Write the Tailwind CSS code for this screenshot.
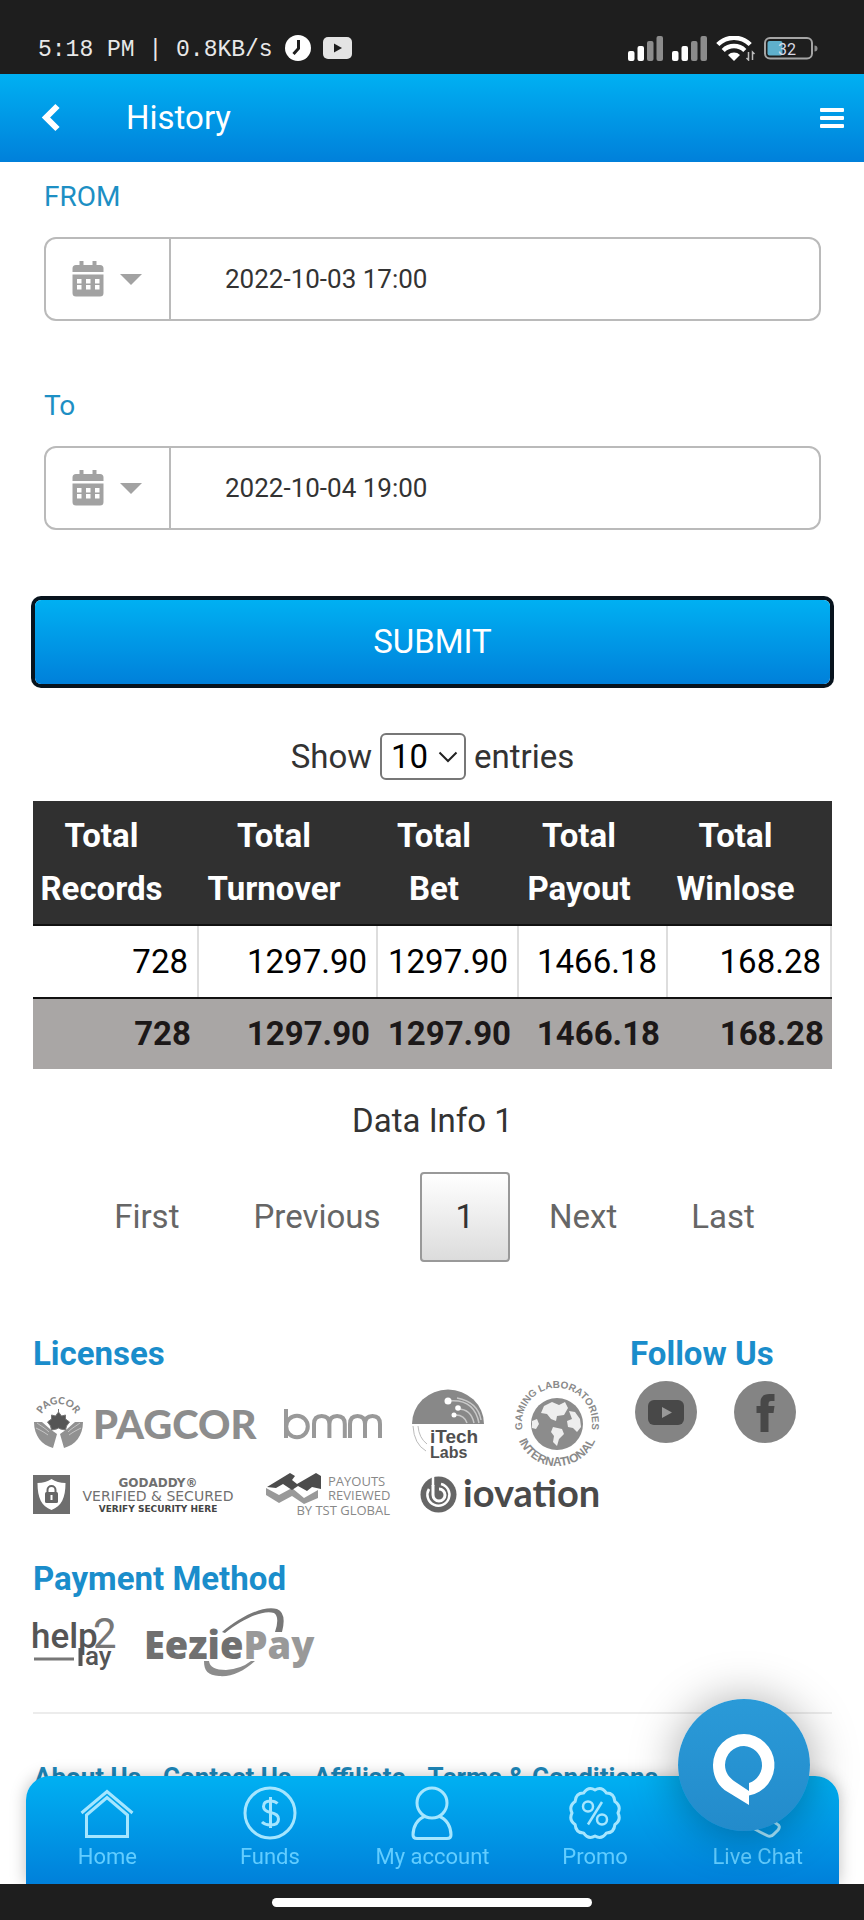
<!DOCTYPE html>
<html lang="en">
<head>
    <meta charset="UTF-8">
    <meta name="viewport" content="width=device-width, initial-scale=1.0">
    <title>History</title>
    <script src="https://cdn.jsdelivr.net/npm/@tailwindcss/browser@4"></script>
</head>
<body class="bg-white font-[Roboto,sans-serif] text-[#333]">

    <!-- Phone status bar -->
    <div class="h-[74px] bg-[#1e1e1e] flex items-end justify-between pl-[38px] pr-[46px] pb-3">
        <div class="flex items-center gap-3 text-[#e8e8e8]">
            <span class="font-['Liberation_Mono',monospace] text-[23px] leading-6 pt-1 whitespace-nowrap">5:18 PM | 0.8KB/s</span>
            <svg class="w-[26px] h-[26px]" viewBox="0 0 26 26"><circle cx="13" cy="13" r="13" fill="#fff"/><path d="M13.500 5v8.500L8.500 19" fill="none" stroke="#1e1e1e" stroke-width="3"/></svg>
            <svg class="w-[29px] h-[22px]" viewBox="0 0 29 22"><rect width="29" height="22" rx="5" fill="#e4e4e4"/><path d="M11 6.500v9l8-4.500z" fill="#1e1e1e"/></svg>
        </div>
        <div class="flex items-center gap-2 pb-px">
            <svg class="w-[36px] h-[25px]" viewBox="0 0 36 25"><g fill="#fff"><rect x="0" y="15" width="6.500" height="10" rx="2"/><rect x="9.500" y="10" width="6.500" height="15" rx="2"/></g><g fill="#8c8c8c"><rect x="19" y="5" width="6.500" height="20" rx="2"/><rect x="28.500" y="0" width="6.500" height="25" rx="2"/></g></svg>
            <svg class="w-[36px] h-[25px]" viewBox="0 0 36 25"><g fill="#fff"><rect x="0" y="15" width="6.500" height="10" rx="2"/><rect x="9.500" y="10" width="6.500" height="15" rx="2"/></g><g fill="#8c8c8c"><rect x="19" y="5" width="6.500" height="20" rx="2"/><rect x="28.500" y="0" width="6.500" height="25" rx="2"/></g></svg>
            <svg class="w-[40px] h-[25px]" viewBox="0 0 40 25"><g fill="none" stroke="#fff" stroke-width="4.500"><path d="M1.800 8.500a23 23 0 0 1 32.400 0"/><path d="M7.200 14.500a15.500 15.500 0 0 1 21.600 0"/></g><path d="M12 19a8.500 8.500 0 0 1 12 0l-6 6z" fill="#fff"/><path d="M32.500 16v8l-2-2M36.500 24v-8l2 2" fill="none" stroke="#bbb" stroke-width="1.500"/></svg>
            <svg class="w-[54px] h-[23px]" viewBox="0 0 54 23"><rect x="1" y="1" width="47" height="20.500" rx="5" fill="none" stroke="#a5a5a5" stroke-width="2"/><rect x="3.500" y="4" width="15" height="14.500" rx="2" fill="#5fb0cc"/><path d="M50.500 8.500q3 0 3 3t-3 3z" fill="#8c8c8c"/><text x="14" y="17.500" font-size="16" font-family="Roboto, sans-serif" fill="#d8d8e4">32</text></svg>
        </div>
    </div>

    <header class="h-[88px] bg-linear-to-b from-[#00b0f2] to-[#0080da] flex items-center text-white pl-10 pr-5">
        <button type="button" aria-label="Back">
            <svg class="w-5 h-8" viewBox="0 0 20 32" fill="none" stroke="currentColor" stroke-width="6"><path d="M17.500 4 6 15.500 17.500 27"/></svg>
        </button>
        <h1 class="flex-1 pl-[66px] text-[33px] leading-10">History</h1>
        <button type="button" aria-label="Menu">
            <svg class="w-6 h-5" viewBox="0 0 24 20" fill="currentColor"><rect width="24" height="4" rx="1"/><rect y="8" width="24" height="4" rx="1"/><rect y="16" width="24" height="4" rx="1"/></svg>
        </button>
    </header>

    <main class="pl-[33px] pr-8 pb-32">
        <form class="pt-[15px]">
            <div class="mx-[11px] flex flex-col gap-[65px]">
                <div>
                    <label for="from" class="block text-[28px] leading-10 text-[#1d8fc4] mb-5">FROM</label>
                    <div class="flex h-[84px] border-2 border-[#bababa] rounded-xl overflow-hidden">
                        <button type="button" aria-label="Pick start date" class="w-[125px] shrink-0 border-r-2 border-[#bababa] flex items-center gap-4 pl-[26px] text-[#a2a2a2]">
                            <svg class="w-8 h-9" viewBox="0 0 32 36" fill="currentColor"><path fill-rule="evenodd" d="M7.500 0h4v4h9V0h4v4H28a3.500 3.500 0 0 1 3.500 3.500V11H.5V7.500A3.500 3.500 0 0 1 4 4h3.500zM.5 13.500h31V32a3.500 3.500 0 0 1-3.500 3.500H4A3.500 3.500 0 0 1 .5 32zM5 18v4.500h4.500V18zm9 0v4.500h4.500V18zm9 0v4.500h4.500V18zM5 24v4.500h4.500V24zm9 0v4.500h4.500V24zm9 0v4.500h4.500V24z"/></svg>
                            <svg class="w-[22px] h-[11px]" viewBox="0 0 22 11" fill="currentColor"><path d="M0 0h22L11 11z"/></svg>
                        </button>
                        <input id="from" type="text" value="2022-10-03 17:00" class="flex-1 min-w-0 pl-[54px] text-[26px] text-[#333] outline-none">
                    </div>
                </div>
                <div>
                    <label for="to" class="block text-[28px] leading-10 text-[#1d8fc4] mb-5">To</label>
                    <div class="flex h-[84px] border-2 border-[#bababa] rounded-xl overflow-hidden">
                        <button type="button" aria-label="Pick end date" class="w-[125px] shrink-0 border-r-2 border-[#bababa] flex items-center gap-4 pl-[26px] text-[#a2a2a2]">
                            <svg class="w-8 h-9" viewBox="0 0 32 36" fill="currentColor"><path fill-rule="evenodd" d="M7.500 0h4v4h9V0h4v4H28a3.500 3.500 0 0 1 3.500 3.500V11H.5V7.500A3.500 3.500 0 0 1 4 4h3.500zM.5 13.500h31V32a3.500 3.500 0 0 1-3.500 3.500H4A3.500 3.500 0 0 1 .5 32zM5 18v4.500h4.500V18zm9 0v4.500h4.500V18zm9 0v4.500h4.500V18zM5 24v4.500h4.500V24zm9 0v4.500h4.500V24zm9 0v4.500h4.500V24z"/></svg>
                            <svg class="w-[22px] h-[11px]" viewBox="0 0 22 11" fill="currentColor"><path d="M0 0h22L11 11z"/></svg>
                        </button>
                        <input id="to" type="text" value="2022-10-04 19:00" class="flex-1 min-w-0 pl-[54px] text-[26px] text-[#333] outline-none">
                    </div>
                </div>
            </div>
            <div class="mt-[70px] px-[2px]">
                <button type="submit" class="block w-full h-[84px] rounded-md ring-4 ring-[#07131d] bg-linear-to-b from-[#00b0f2] to-[#0080da] text-white text-[33px]">SUBMIT</button>
            </div>
        </form>

        <div class="mt-[49px] flex items-center justify-center gap-2 text-[33px] leading-[47px]">
            <label for="entries">Show</label>
            <div class="relative">
                <select id="entries" class="block appearance-none w-[86px] h-[47px] border-2 border-[#777] rounded-md pl-[9px] text-[33px] leading-10 text-black bg-white">
                    <option>10</option>
                    <option>25</option>
                    <option>50</option>
                </select>
                <svg class="absolute right-2 top-[18px] w-5 h-3 pointer-events-none" viewBox="0 0 20 12" fill="none" stroke="#222" stroke-width="2"><path d="m1.500 1.500 8.500 8.500 8.500-8.500"/></svg>
            </div>
            <span>entries</span>
        </div>

        <table class="mt-[21px] w-full table-fixed border-separate border-spacing-0 text-[33px]">
            <colgroup>
                <col class="w-[166px]">
                <col class="w-[179px]">
                <col class="w-[141px]">
                <col class="w-[149px]">
                <col>
            </colgroup>
            <thead class="bg-[#303030] text-white leading-[53px]">
                <tr>
                    <th class="pt-2 pb-[9px] pl-[5px] pr-[34px] border-b-2 border-[#111]">Total<br>Records</th>
                    <th class="pt-2 pb-[9px] pl-[5px] pr-[34px] border-b-2 border-[#111]">Total<br>Turnover</th>
                    <th class="pt-2 pb-[9px] pl-[5px] pr-[34px] border-b-2 border-[#111]">Total<br>Bet</th>
                    <th class="pt-2 pb-[9px] pl-[5px] pr-[34px] border-b-2 border-[#111]">Total<br>Payout</th>
                    <th class="pt-2 pb-[9px] pl-[5px] pr-[34px] border-b-2 border-[#111]">Total<br>Winlose</th>
                </tr>
            </thead>
            <tbody class="text-black text-right">
                <tr class="h-[71px]">
                    <td class="pr-[9px] border-r-2 border-[#ddd]">728</td>
                    <td class="pr-[9px] border-r-2 border-[#ddd]">1297.90</td>
                    <td class="pr-[9px] border-r-2 border-[#ddd]">1297.90</td>
                    <td class="pr-[9px] border-r-2 border-[#ddd]">1466.18</td>
                    <td class="pr-[9px] border-r-2 border-[#ddd]">168.28</td>
                </tr>
            </tbody>
            <tfoot class="bg-[#a9a6a5] text-[#1c1818] text-right font-bold">
                <tr class="h-[72px]">
                    <td class="pr-2 border-t-2 border-[#111]">728</td>
                    <td class="pr-2 border-t-2 border-[#111]">1297.90</td>
                    <td class="pr-2 border-t-2 border-[#111]">1297.90</td>
                    <td class="pr-2 border-t-2 border-[#111]">1466.18</td>
                    <td class="pr-2 border-t-2 border-[#111]">168.28</td>
                </tr>
            </tfoot>
        </table>

        <p class="mt-7 text-center text-[33px] leading-[48px]">Data Info 1</p>

        <nav aria-label="Pages" class="mt-[27px] pl-1 flex justify-center gap-1 text-[33px] text-[#666]">
            <a href="#" class="px-[35px] leading-[90px]">First</a>
            <a href="#" class="px-[35px] leading-[90px]">Previous</a>
            <a href="#" aria-current="page" class="px-[34px] leading-[86px] border-2 border-[#999] rounded-sm bg-linear-to-b from-white to-[#dcdcdc] text-[#333]">1</a>
            <a href="#" class="px-[35px] leading-[90px]">Next</a>
            <a href="#" class="px-[35px] leading-[90px]">Last</a>
        </nav>

        <footer class="mt-[68px]">
            <div class="flex gap-[30px]">
                <section class="w-[567px]">
                    <h2 class="text-[33px] leading-[48px] font-bold text-[#1a8dcb]">Licenses</h2>
                    <div class="mt-[3px] flex items-center justify-between">
                        <!-- PAGCOR -->
                        <svg class="w-[222px] h-[50px] overflow-visible" viewBox="0 0 222 50" role="img" aria-label="PAGCOR">
                            <defs><path id="pagcorArc" d="M6.500 24a19 19 0 0 1 38 0"/></defs>
                            <text font-family="Lato, sans-serif" font-weight="900" font-size="10" fill="#888"><textPath href="#pagcorArc" startOffset="50%" text-anchor="middle">PAGCOR</textPath></text>
                            <path d="M1 23h8l8 7 7 5-4 14C9 46 1 37 1 23zM50 23h-8l-8 7-7 5 4 14c11-3 19-12 19-26z" fill="#919191"/>
                            <path d="M4 24c4 3 8 5 12 9M3 29c4 2 8 4 12 7M47 24c-4 3-8 5-12 9M48 29c-4 2-8 4-12 7" stroke="#c4c4c4" fill="none"/>
                            <path d="M25.500 10v4M25.500 13l3 4 4-1v4l4 3-3 4-1 4-5-1-2-1-2 1-5 1-1-4-3-4 4-3v-4l4 1z" fill="#555" stroke="#777"/>
                            <path d="M25.500 32l-3 17h6z" fill="#fff"/>
                            <text x="60" y="40" font-family="Lato, sans-serif" font-weight="900" font-size="40" fill="#8d8d8d">PAGCOR</text>
                        </svg>
                        <!-- bmm -->
                        <svg class="w-[98px] h-[32px]" viewBox="0 0 98 32" role="img" aria-label="bmm">
                            <g fill="none" stroke="#999" stroke-width="4"><path d="M2 1v29"/><circle cx="13" cy="18.500" r="10.800"/><path d="M30 30V16q0-8 7.700-8t7.700 8v14M45.400 16q0-8 7.700-8t7.700 8v14"/><path d="M66 30V16q0-8 7.500-8t7.500 8v14M81 16q0-8 7.500-8t7.500 8v14"/></g>
                        </svg>
                        <!-- iTech Labs -->
                        <svg class="w-[73px] h-[70px] overflow-visible" viewBox="0 0 73 70" role="img" aria-label="iTech Labs">
                            <path d="M0 35a36 34.500 0 0 1 72 0z" fill="#888"/>
                            <g fill="none" stroke="#c8c8c8" stroke-width="1.500"><path d="M36 12q26-3 31 22M45 9q21 4 24 22M46 20q13 0 16 14M42 26q10-1 13 8"/></g>
                            <g fill="#fff"><circle cx="36" cy="12" r="3.500"/><circle cx="46" cy="19" r="2.800"/><circle cx="42" cy="26" r="2.500"/></g>
                            <path d="M1 37q1 18 13 25M6 37q1 12 9 18" fill="none" stroke="#bbb"/>
                            <g font-family="'Liberation Sans', sans-serif" font-weight="700" fill="#505050"><text x="18" y="54" font-size="19">iTech</text><text x="18" y="69" font-size="16">Labs</text></g>
                        </svg>
                        <!-- Gaming Laboratories International -->
                        <svg class="w-[86px] h-[86px] overflow-visible" viewBox="0 0 86 86" role="img" aria-label="Gaming Laboratories International">
                            <defs><path id="gliTop" d="M8.300 46.500a35 35 0 1 1 69.400 0"/><path id="gliBottom" d="M2 50a41.500 41.500 0 0 0 82 0"/></defs>
                            <g font-family="'Liberation Sans', sans-serif" font-weight="700" fill="#8a8a8a">
                                <text font-size="10"><textPath href="#gliTop" startOffset="50%" text-anchor="middle">GAMING LABORATORIES</textPath></text>
                                <text font-size="12"><textPath href="#gliBottom" startOffset="50%" text-anchor="middle">INTERNATIONAL</textPath></text>
                            </g>
                            <circle cx="43" cy="43" r="26" fill="#8c8c8c"/>
                            <g fill="#eee"><path d="M30 25l8-4 7 3 6-3 3 6-4 7-7 1-1 5-5-2-4-5-6-1zM39 46l9 2 2 5-5 5-2 7-4-4 1-6-3-4zM55 30l6 1 5 7 1 8-4 5-4-4-5-1-1-6 5-2zM18 40l5-2 2 5-3 5-4-1z"/></g>
                        </svg>
                    </div>
                    <div class="mt-1 flex items-center justify-between">
                        <!-- GoDaddy -->
                        <svg class="w-[203px] h-[42px] overflow-visible" viewBox="0 0 203 42" role="img" aria-label="GoDaddy verified and secured">
                            <rect y="1" width="37" height="39" fill="#6e6e6e"/>
                            <path d="M18.500 5q6 4 14 4c0 15-4 23-14 27C8.500 32 4.500 24 4.500 9q8 0 14-4z" fill="#fff"/>
                            <path d="M14.500 19v-3a4 4 0 0 1 8 0v3" fill="none" stroke="#666" stroke-width="2"/><rect x="12" y="18" width="13" height="11" rx="1.500" fill="#666"/><path d="M18.500 21v5" stroke="#fff" stroke-width="2"/>
                            <g text-anchor="middle" fill="#707070"><text x="125" y="13" font-size="12" font-weight="700" font-family="'DejaVu Sans', sans-serif">GODADDY®</text><text x="125" y="27" font-size="14" font-family="'DejaVu Sans', sans-serif">VERIFIED &amp; SECURED</text><text x="125" y="38" font-size="9" font-weight="700" font-family="'DejaVu Sans', sans-serif" fill="#444">VERIFY SECURITY HERE</text></g>
                        </svg>
                        <!-- TST Global -->
                        <svg class="w-[126px] h-[48px] overflow-visible" viewBox="0 0 126 48" role="img" aria-label="Payouts reviewed by TST Global">
                            <path d="M1 17l13 7 13-7 12 10 14-8v8L39 33 27 25 14 32 1 24z" fill="#999"/>
                            <path d="M2 16L25 2l5 3-3 4 5 4L51 2l5 3v13l-9-2-5 4-9-5-6 4-9-6-7 4z" fill="#4c4c4c"/>
                            <g font-family="'Open Sans', sans-serif" font-size="13" fill="#888"><text x="63" y="15">PAYOUTS</text><text x="63" y="29">REVIEWED</text><text x="125" y="44" text-anchor="end">BY TST GLOBAL</text></g>
                        </svg>
                        <!-- iovation -->
                        <svg class="w-[180px] h-[38px] overflow-visible" viewBox="0 0 180 38" role="img" aria-label="iovation">
                            <circle cx="18.500" cy="18.500" r="18" fill="#666"/><path d="M13 9v10a6 6 0 1 0 6-6" fill="none" stroke="#fff" stroke-width="3"/><path d="M13 0v10M21 8a11 11 0 1 1-12 5" fill="none" stroke="#fff" stroke-width="2.500"/>
                            <text x="43" y="31" font-family="Lato, sans-serif" font-weight="700" font-size="38" fill="#4a4a4a">iovation</text>
                        </svg>
                    </div>
                </section>
                <section>
                    <h2 class="text-[33px] leading-[48px] font-bold text-[#1a8dcb]">Follow Us</h2>
                    <div class="mt-[3px] pl-[5px] flex gap-[37px]">
                        <a href="#" aria-label="YouTube"><svg class="w-[62px] h-[62px]" viewBox="0 0 62 62"><circle cx="31" cy="31" r="31" fill="#848484"/><rect x="13" y="19" width="36" height="25" rx="6" fill="#484848"/><path d="M27 26v11l10-5.500z" fill="#999"/></svg></a>
                        <a href="#" aria-label="Facebook"><svg class="w-[62px] h-[62px]" viewBox="0 0 62 62"><circle cx="31" cy="31" r="31" fill="#848484"/><path d="M26.500 51V32H22.500v-7h4v-4q0-8 9-8h5v7h-3.500q-2.500 0-2.500 3v2h6l-1 7h-5v19z" fill="#484848"/></svg></a>
                    </div>
                </section>
            </div>

            <section class="mt-9">
                <h2 class="text-[33px] leading-[48px] font-bold text-[#1a8dcb]">Payment Method</h2>
                <div class="mt-[3px] flex items-center gap-[31px]">
                    <!-- help2pay -->
                    <svg class="w-[82px] h-[60px] overflow-visible" viewBox="0 0 82 60" role="img" aria-label="help2pay">
                        <g font-family="Roboto, sans-serif" fill="#555"><text x="-2" y="36" font-size="35" font-weight="500">help</text><text x="60" y="36" font-size="42" fill="#777">2</text><text x="52" y="53" font-size="26" font-weight="500">ay</text></g>
                        <path d="M1 47h40" stroke="#777" stroke-width="3"/><path d="M47.500 36v18" stroke="#555" stroke-width="4"/>
                    </svg>
                    <!-- EeziePay -->
                    <svg class="w-[170px] h-[72px] overflow-visible" viewBox="0 0 170 72" role="img" aria-label="EeziePay">
                        <path d="M76 26C93 12 116-1 131 3q10 4 5 23h-7q5-15-1-19C116 3 94 15 79 27z" fill="#777"/>
                        <path d="M58 55h5q1 9 17 9 15-1 25-9h4C97 66 85 71 73 70 62 69 58 65 58 55z" fill="#8c8c8c"/>
                        <text x="-2" y="53" font-family="'Open Sans', sans-serif" font-weight="800" font-size="38" fill="#707070">Eezie<tspan fill="#999">Pay</tspan></text>
                    </svg>
                </div>
            </section>

            <hr class="mt-[34px] border-t-2 border-[#ececec]">
            <div class="mt-[47px] flex gap-[22px] px-px text-[26px] leading-8 font-bold text-[#1d86b8] whitespace-nowrap">
                <a href="#">About Us</a>
                <a href="#">Contact Us</a>
                <a href="#">Affiliate</a>
                <a href="#">Terms &amp; Conditions</a>
            </div>
        </footer>
    </main>

    <!-- Bottom navigation -->
    <div class="fixed inset-x-0 bottom-0">
        <nav aria-label="Main" class="ml-[26px] mr-[25px] rounded-t-3xl bg-linear-to-b from-[#00b0f2] to-[#0080da] shadow-[0_0_16px_rgba(0,0,0,0.25)] grid grid-cols-5 pt-[10px] pb-[13px] text-[22px] leading-7 text-[#62cdff]">
            <a href="#" class="flex flex-col items-center gap-[3px]">
                <svg class="w-[54px] h-[54px]" viewBox="0 0 54 54" fill="none" stroke="#a5e6ff" stroke-width="3"><path d="M1.500 27 27 5.500 52.500 27"/><path d="M6.500 50.500V29L27 11.500 47.500 29v21.500z"/></svg>
                Home
            </a>
            <a href="#" class="flex flex-col items-center gap-[3px]">
                <svg class="w-[54px] h-[54px]" viewBox="0 0 54 54" fill="none" stroke="#a5e6ff" stroke-width="3"><circle cx="27" cy="27" r="25"/><path d="M34.500 17.500Q32 15 27.500 15q-7 0-7 5.500 0 4.500 7 6 8 1.500 8 6.500 0 6-8 6-5.500 0-8.500-3M27.500 11v31"/></svg>
                Funds
            </a>
            <a href="#" class="flex flex-col items-center gap-[3px]">
                <svg class="w-[54px] h-[54px]" viewBox="0 0 54 54" fill="none" stroke="#a5e6ff" stroke-width="3"><circle cx="27" cy="17" r="15"/><path d="M20.500 30C12 33 8 41 8 49q0 3.500 4 3.500h30q4 0 4-3.500c0-8-4-16-12.500-19"/></svg>
                My account
            </a>
            <a href="#" class="flex flex-col items-center gap-[3px]">
                <svg class="w-[54px] h-[54px]" viewBox="0 0 54 54" fill="none" stroke="#a5e6ff" stroke-width="3" stroke-linejoin="round"><path d="M27 4Q33.500 0 38.500 7.100Q46.100 7 46.900 15.500Q53.500 19.900 50 27Q53.500 34.100 46.900 38.500Q46.100 47 38.500 46.900Q33.500 54 27 50Q20.500 54 15.500 46.900Q7.900 47 7.100 38.500Q.5 34.100 4 27Q.5 19.900 7.100 15.500Q7.900 7 15.500 7.100Q20.500 0 27 4z"/><g stroke-width="2.500"><circle cx="20" cy="20.500" r="5"/><circle cx="34" cy="33.500" r="5"/><path d="M34 16 20 38.500"/></g></svg>
                Promo
            </a>
            <a href="#" class="flex flex-col items-center gap-[3px]">
                <svg class="w-[54px] h-[54px]" viewBox="0 0 54 54" fill="none" stroke="#a5e6ff" stroke-width="3"><path d="M4 6q-3 6 1 15 8 18 24 25l7 3.500q4 2 7-1.500l4-4q3-4-1-6l-9-6q-4-2-7 2-8-4-13-13 4-3 2-7L13 5q-3-4-9 1z"/></svg>
                Live Chat
            </a>
        </nav>
        <div class="h-9 bg-[#1e1e1e] flex items-center justify-center">
            <div class="w-[37%] h-[9px] rounded-full bg-white"></div>
        </div>
    </div>

    <!-- Floating chat button -->
    <button type="button" aria-label="Open chat" class="fixed right-[54px] bottom-[89px] w-[132px] h-[132px] rounded-full bg-linear-to-b from-[#2a9ad8] to-[#238bcb] shadow-[0_2px_48px_rgba(0,0,0,0.35)]">
        <svg class="w-full h-full" viewBox="0 0 132 132"><path fill="#fff" fill-rule="evenodd" d="M66 35a31 31 0 0 1 5 61.500V106L46.500 91C38 84 35 75 35 66a31 31 0 0 1 31-31zm0 12a19 19 0 0 0-19 19c0 8 5 13 9 16l15 10v-8a19 19 0 0 0-5-37z"/></svg>
    </button>

</body>
</html>
